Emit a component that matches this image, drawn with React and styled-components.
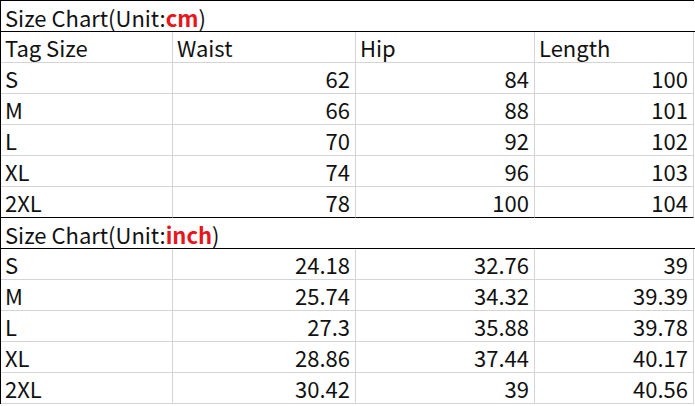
import React from 'react'
import styled, { createGlobalStyle } from 'styled-components'

const GlobalStyle = createGlobalStyle`
  html, body {
    margin: 0;
    padding: 0;
    background: #fff;
  }
  body {
    font-family: "Noto Sans CJK SC", "Noto Sans", sans-serif;
    color: #111;
  }
`

const headers = ['Tag Size', 'Waist', 'Hip', 'Length']

const cmRows = [
  ['S', '62', '84', '100'],
  ['M', '66', '88', '101'],
  ['L', '70', '92', '102'],
  ['XL', '74', '96', '103'],
  ['2XL', '78', '100', '104'],
]

const inchRows = [
  ['S', '24.18', '32.76', '39'],
  ['M', '25.74', '34.32', '39.39'],
  ['L', '27.3', '35.88', '39.78'],
  ['XL', '28.86', '37.44', '40.17'],
  ['2XL', '30.42', '39', '40.56'],
]

export default function App() {
  return (
    <>
      <GlobalStyle />
      <Sheet>
        <Title>
          Size Chart(Unit:<Unit>cm</Unit>)
        </Title>
        {headers.map((h) => (
          <Cell key={h}>{h}</Cell>
        ))}
        {cmRows.map((row, r) =>
          row.map((v, c) => (
            <Cell key={`cm-${r}-${c}`} $num={c > 0} $dark={r === cmRows.length - 1}>
              {v}
            </Cell>
          ))
        )}
        <Title>
          Size Chart(Unit:<Unit>inch</Unit>)
        </Title>
        {inchRows.map((row, r) =>
          row.map((v, c) => (
            <Cell key={`in-${r}-${c}`} $num={c > 0}>
              {v}
            </Cell>
          ))
        )}
      </Sheet>
    </>
  )
}

const Sheet = styled.div`
  display: grid;
  grid-template-columns: 172px 183px 179px 159px;
  grid-auto-rows: 31px;
  width: 693px;
  border-top: 1px solid #000;
  border-left: 1px solid #000;
  font-size: 22px;
  line-height: 30px;
`

const Title = styled.div`
  grid-column: 1 / -1;
  margin-right: -1px;
  box-sizing: border-box;
  border-bottom: 1px solid #000;
  padding: 1px 0 0 4px;
  white-space: nowrap;
`

const Unit = styled.span`
  color: #e8151b;
  font-weight: bold;
`

const Cell = styled.div`
  box-sizing: border-box;
  border-right: 1px solid #d4d4d4;
  border-bottom: 1px solid ${(p) => (p.$dark ? '#000' : '#d4d4d4')};
  padding: 0 ${(p) => (p.$num ? '5px' : '0')} 0 ${(p) => (p.$num ? '0' : '4px')};
  text-align: ${(p) => (p.$num ? 'right' : 'left')};
  white-space: nowrap;
`
